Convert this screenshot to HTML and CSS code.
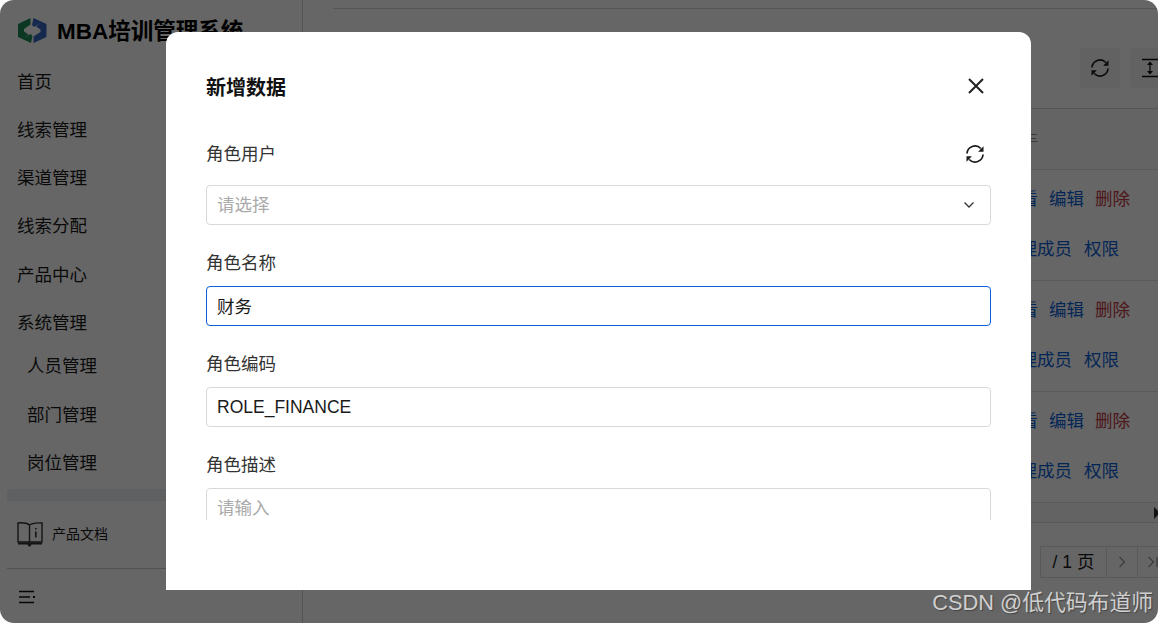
FILE: index.html
```html
<!DOCTYPE html>
<html lang="zh">
<head>
<meta charset="utf-8">
<title>MBA培训管理系统</title>
<link rel="stylesheet" href="styles.css">
</head>
<body>
<div class="app">
  <aside class="sidebar">
    <div class="brand">
      <svg class="logo" width="29" height="25" viewBox="0 0 29 25">
        <path fill="#1f8a55" d="M0 6 12.500 0v6.500L6 11v2.500l4.500 3L6 20l6.500-4 2 2L13 25 0 19Z"/>
        <path fill="#3268c0" d="M15.500 0 28.500 6v13L15.500 25v-6.500l7-4.500v-2.500l-4.500-3 4.500-3.500-6.500 4-2-2Z"/>
      </svg>
      <span class="brand-name">MBA培训管理系统</span>
    </div>
    <nav class="nav">
      <a class="nav-item">首页</a>
      <a class="nav-item">线索管理</a>
      <a class="nav-item">渠道管理</a>
      <a class="nav-item">线索分配</a>
      <a class="nav-item">产品中心</a>
      <a class="nav-item">系统管理</a>
      <a class="nav-item sub first">人员管理</a>
      <a class="nav-item sub">部门管理</a>
      <a class="nav-item sub">岗位管理</a>
      <a class="nav-item sub active">角色管理</a>
    </nav>
    <div class="docs">
      <svg width="26" height="25" viewBox="0 0 26 25" fill="none" stroke="#333" stroke-width="1.400">
        <path d="M12.500 3C10 1 4 .7 1 1v19h11.500V3C15 1 22 .7 25 1v19H12.500"/>
        <path d="M18.800 6v1.500M18.800 9.500v6" stroke-width="1.600"/>
        <path d="M1 21.500h24" stroke-width="2"/>
        <path d="M10.500 22h4l-1 2.500h-2Z" fill="#333" stroke="none"/>
      </svg>
      <span class="docs-text">产品文档</span>
    </div>
    <div class="collapse">
      <svg width="18" height="14" viewBox="0 0 18 14" fill="none" stroke="#111" stroke-width="1.500">
        <path d="M1 1.500h15M1 7h11M1 12.500h15"/><path d="M15 7h2" stroke-width="2"/>
      </svg>
    </div>
  </aside>
  <main class="main">
    <div class="topline"></div>
    <div class="toolbar">
      <button class="tool">
        <svg width="20" height="20" viewBox="0 0 20 20"><use href="#sync"/></svg>
      </button>
      <button class="tool">
        <svg width="20" height="20" viewBox="0 0 20 20" fill="none" stroke="#111" stroke-width="1.300"><path d="M2 1.500h16M2 18.500h16M10 4v12"/><path fill="#111" stroke="none" d="M10 3.500l3 3.500H7ZM10 16.500l3-3.500H7Z"/></svg>
      </button>
    </div>
    <div class="table">
      <div class="thead"><span class="thead-icon">三</span></div>
      <div class="row">
        <div class="line"><a>查看</a><a>编辑</a><a class="danger">删除</a></div>
        <div class="line second"><a>管理成员</a><a>权限</a></div>
      </div>
      <div class="row">
        <div class="line"><a>查看</a><a>编辑</a><a class="danger">删除</a></div>
        <div class="line second"><a>管理成员</a><a>权限</a></div>
      </div>
      <div class="row">
        <div class="line"><a>查看</a><a>编辑</a><a class="danger">删除</a></div>
        <div class="line second"><a>管理成员</a><a>权限</a></div>
      </div>
      <div class="hscroll"><span class="arrow"></span></div>
    </div>
    <div class="pager">
      <span class="page-cell wide"><span class="page-text">/ 1 页</span></span>
      <span class="page-cell nav-btn">
        <svg width="8" height="12" viewBox="0 0 8 12" fill="none" stroke="#999" stroke-width="1.300"><path d="M1.500 1 6.500 6l-5 5"/></svg>
      </span>
      <span class="page-cell nav-btn last">
        <svg width="12" height="12" viewBox="0 0 12 12" fill="none" stroke="#999" stroke-width="1.300"><path d="M1.500 1 6.500 6l-5 5M10 1v10"/></svg>
      </span>
    </div>
  </main>
  <div class="overlay"></div>
  <section class="modal">
    <header class="modal-head">
      <h2>新增数据</h2>
      <svg width="18" height="18" viewBox="0 0 18 18" fill="none" stroke="#222" stroke-width="2"><path d="M2 2l14 14M16 2 2 16"/></svg>
    </header>
    <div class="modal-body">
      <div class="label-row">
        <label>角色用户</label>
        <svg width="20" height="20" viewBox="0 0 20 20"><use href="#sync"/></svg>
      </div>
      <div class="field select">
        <span class="placeholder">请选择</span>
        <svg width="12" height="8" viewBox="0 0 12 8" fill="none" stroke="#333" stroke-width="1.300"><path d="M1.500 1.500 6 6l4.500-4.500"/></svg>
      </div>
      <label class="label">角色名称</label>
      <div class="field focus"><span class="value">财务</span></div>
      <label class="label">角色编码</label>
      <div class="field">ROLE_FINANCE</div>
      <label class="label">角色描述</label>
      <div class="field"><span class="placeholder">请输入</span></div>
    </div>
  </section>
  <div class="watermark">CSDN @低代码布道师</div>
</div>
<svg class="defs" width="0" height="0">
  <symbol id="sync" viewBox="0 0 20 20">
    <path fill="none" stroke="#1a1a1a" stroke-width="1.700" d="M2 9.500A8 8 0 0 1 15.800 4.500M18 10.500A8 8 0 0 1 4.200 15.500"/>
    <path fill="#1a1a1a" d="M18.500 2.300v5.400h-5.400ZM1.500 17.700v-5.400h5.400Z"/>
  </symbol>
</svg>
</body>
</html>
```
FILE: styles.css
```css
* { box-sizing: border-box; }
html, body { margin: 0; height: 100%; background: #fff; }
body {
  font-family: "Liberation Sans", "Noto Sans CJK SC", sans-serif;
  font-size: 17.5px;
  color: #1a1a1a;
  overflow: hidden;
}
.app {
  position: relative;
  width: 1158px;
  height: 623px;
  display: flex;
  overflow: hidden;
  border-radius: 14px;
}
.defs { position: absolute; }

.sidebar {
  width: 303px;
  height: 623px;
  flex: none;
  display: flex;
  flex-direction: column;
  border-right: 1px solid #d0d0d0;
  padding-top: 12px;
}
.brand { display: flex; align-items: center; gap: 10px; height: 36px; padding-left: 18px; flex: none; }
.logo { flex: none; }
.brand-name { font-size: 22.500px; font-weight: 700; color: #000; margin-top: -3px; }
.nav { flex: 1; min-height: 0; overflow: hidden; display: flex; flex-direction: column; padding-top: 9.500px; }
.nav-item { display: block; height: 48.300px; line-height: 48.300px; padding-left: 17px; flex: none; }
.nav-item.sub { padding-left: 27px; }
.nav-item.first { margin-top: -5px; }
.nav-item.active { background: #ebf0f5; margin: 2px 0 0 7px; padding-left: 20px; border-radius: 4px; line-height: 42px; }
.docs { height: 68px; flex: none; display: flex; align-items: center; gap: 9px; font-size: 14px; border-bottom: 1px solid #ccc; margin-left: 7px; padding-left: 10px; }
.docs svg { margin-top: -1px; }
.docs-text { margin-top: -3px; }
.collapse { height: 54px; flex: none; padding: 19px 0 0 18px; }

.main { flex: 1; min-width: 0; padding-left: 30px; display: flex; flex-direction: column; }
.topline { height: 9px; border-bottom: 1px solid #d8d8d8; flex: none; }
.toolbar { height: 99px; flex: none; display: flex; justify-content: flex-end; gap: 10px; padding-top: 39px; margin-right: -12px; }
.tool { width: 40px; height: 40px; border: 0; border-radius: 4px; background: #f5f5f5; display: flex; align-items: center; justify-content: center; padding: 0; }
.table { border-top: 1px solid #d8d8d8; margin-left: -30px; flex: none; }
.thead { height: 61px; background: #fafafa; border-bottom: 1px solid #e0e0e0; display: flex; justify-content: flex-end; align-items: center; padding: 0 120px 4px 0; color: #777; font-size: 10px; }
.row { height: 111px; border-bottom: 1px solid #e4e4e4; padding-top: 2px; }
.line { display: flex; height: 50px; align-items: center; gap: 11px; padding-left: 700px; white-space: nowrap; }
.line a { color: #0b5fd8; }
.line a.danger { color: #c23a45; }
.line.second { gap: 12px; padding-left: 699px; }
.hscroll { height: 20px; background: #f7f7f7; position: relative; border-bottom: 1px solid #ddd; }
.arrow { position: absolute; right: -2px; top: 4px; border-left: 6px solid #333; border-top: 6px solid transparent; border-bottom: 6px solid transparent; }
.pager { display: flex; justify-content: flex-end; margin-top: 23px; margin-right: -16px; height: 32px; }
.page-cell { display: flex; align-items: center; justify-content: center; border: 1px solid #dedede; border-left: 0; height: 32px; }
.page-cell.wide { width: 67px; border-left: 1px solid #dedede; }
.page-text { margin-top: -3px; }
.page-cell.nav-btn { width: 31px; }
.page-cell.last { width: 36px; justify-content: flex-start; padding-left: 9px; }

.overlay { position: absolute; inset: 0; background: rgba(0, 0, 0, .6); }
.modal {
  position: absolute;
  left: 166px;
  top: 32px;
  width: 865px;
  height: 558px;
  background: #fff;
  border-radius: 12px 12px 0 0;
  padding: 40px 40px 70px;
  display: flex;
  flex-direction: column;
}
.modal-head { display: flex; justify-content: space-between; align-items: center; height: 28px; flex: none; padding-right: 6px; }
.modal-head h2 { margin: 0; font-size: 20px; font-weight: 700; color: #111; }
.modal-body { flex: 1; min-height: 0; overflow: hidden; margin-top: 37px; }
.label-row { display: flex; justify-content: space-between; align-items: center; height: 30px; padding-right: 6px; margin-bottom: 18px; color: #333; }
.label-row svg { margin-top: 3px; }
.label { display: block; height: 24px; line-height: 26px; margin: 25px 0 12px; color: #333; }
.field { height: 40px; border: 1px solid #d9d9d9; border-radius: 4px; padding: 0 10px; display: flex; align-items: center; justify-content: space-between; color: #1a1a1a; }
.field.focus { border-color: #0b5fd8; }
.field.select { padding-right: 15px; }
.placeholder { color: #aaa; padding-bottom: 3px; }
.value { padding-bottom: 2px; }

.watermark {
  position: absolute;
  right: 5px;
  bottom: 7px;
  font-size: 21.800px;
  color: #cfcfcf;
  text-shadow: 1px 1px 1px #444;
  white-space: nowrap;
}
```
